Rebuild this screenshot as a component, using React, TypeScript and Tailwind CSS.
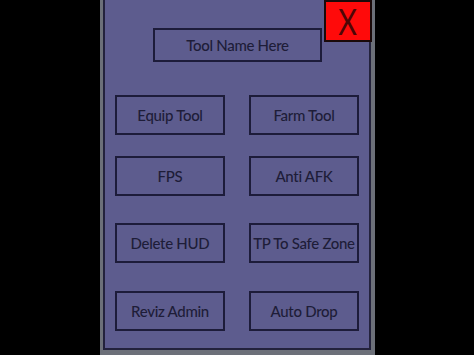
const rows = [
  ['Equip Tool', 'Farm Tool'],
  ['FPS', 'Anti AFK'],
  ['Delete HUD', 'TP To Safe Zone'],
  ['Reviz Admin', 'Auto Drop'],
];

const rowGaps = ['mt-[33px]', 'mt-[21px]', 'mt-[27px]', 'mt-[28px]'];

function Btn({ label }: { label: string }) {
  return (
    <div className="w-[110px] h-[40px] border-2 border-[#1d1c3a] flex items-center justify-center text-[15px] font-medium text-[#1e1d38] whitespace-nowrap tracking-[-0.3px]">
      {label}
    </div>
  );
}

export default function App() {
  return (
    <div
      className="w-[474px] h-[355px] bg-black flex justify-center overflow-hidden"
      style={{ fontFamily: 'Lato, "Noto Sans", sans-serif' }}
    >
      <div className="relative w-[275px] h-[355px] bg-[#6c7079] pl-[3px] pr-[4px] pb-[5px] ml-[1px]">
        <div className="h-full border-2 border-t-0 border-[#23223c] bg-[#5d5c8e] flex flex-col items-center pt-[28px]">
          <div className="w-[169px] h-[34px] border-2 border-[#1d1c3a] flex items-center justify-center text-[15px] font-medium text-[#1e1d38] tracking-[-0.3px] ml-[1px]">
            Tool Name Here
          </div>
          {rows.map((r, i) => (
            <div key={i} className={`flex gap-[24px] ${rowGaps[i]}`}>
              <Btn label={r[0]} />
              <Btn label={r[1]} />
            </div>
          ))}
        </div>
        <div className="absolute top-0 right-[3px] w-[48px] h-[42px] bg-[#ff0a0a] border-2 border-[#1a0a0a] flex items-center justify-center">
          <span className="text-[36px] leading-[36px] text-[#4e0606] scale-x-[0.8]">X</span>
        </div>
      </div>
    </div>
  );
}
